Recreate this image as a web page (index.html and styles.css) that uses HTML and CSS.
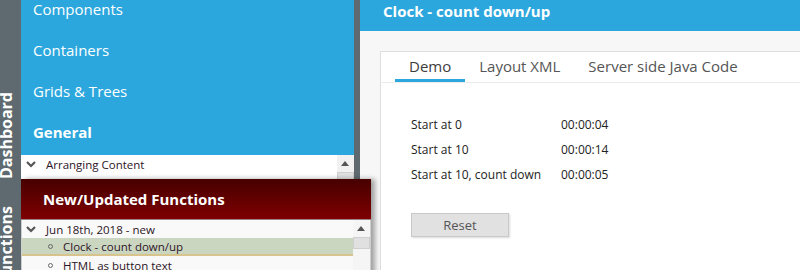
FILE: index.html
```html
<!DOCTYPE html>
<html lang="en">
<head>
    <meta charset="UTF-8">
    <meta name="viewport" content="width=device-width, initial-scale=1.0">
    <title>Clock - count down/up</title>
    <link rel="stylesheet" href="styles.css">
</head>
<body>
    <div class="app">
        <!-- Vertical tab strip -->
        <div class="side-tabs">
            <span class="side-tab first">Dashboard</span>
            <span class="side-tab">Functions</span>
        </div>

        <!-- Navigation sidebar -->
        <div class="sidebar">
            <ul class="menu">
                <li>Components</li>
                <li>Containers</li>
                <li>Grids &amp; Trees</li>
                <li class="active">General</li>
            </ul>
            <div class="tree-box">
                <div class="tree">
                    <div class="tree-row">
                        <svg class="chevron" width="10" height="7" viewBox="0 0 10 7"><polyline points="1,1 5,5 9,1" fill="none" stroke="#555" stroke-width="2.2"/></svg>
                        <span>Arranging Content</span>
                    </div>
                </div>
                <div class="scroll">
                    <div class="scroll-up"></div>
                    <div class="scroll-thumb"></div>
                </div>
            </div>
        </div>

        <!-- Main content -->
        <div class="main">
            <div class="main-header">Clock - count down/up</div>
            <div class="panel">
                <div class="tabs">
                    <div class="tab active">Demo</div>
                    <div class="tab">Layout XML</div>
                    <div class="tab">Server side Java Code</div>
                </div>
                <div class="demo">
                    <div class="clock-grid">
                        <span>Start at 0</span><span>00:00:04</span>
                        <span>Start at 10</span><span>00:00:14</span>
                        <span>Start at 10, count down</span><span>00:00:05</span>
                    </div>
                    <button class="reset-button">Reset</button>
                </div>
            </div>
        </div>
    </div>

    <!-- Floating "New/Updated Functions" panel -->
    <div class="news">
        <div class="news-head">New/Updated Functions</div>
        <div class="news-body">
            <div class="tree">
                <div class="tree-row">
                    <svg class="chevron" width="10" height="7" viewBox="0 0 10 7"><polyline points="1,1 5,5 9,1" fill="none" stroke="#555" stroke-width="2.2"/></svg>
                    <span>Jun 18th, 2018 - new</span>
                </div>
                <div class="tree-row leaf selected"><i class="bullet"></i><span>Clock - count down/up</span></div>
                <div class="tree-row leaf"><i class="bullet"></i><span>HTML as button text</span></div>
            </div>
            <div class="scroll">
                <div class="scroll-up"></div>
                <div class="scroll-thumb"></div>
            </div>
        </div>
    </div>
</body>
</html>
```

FILE: styles.css
```css
/* Basic Reset */
* {
    margin: 0;
    padding: 0;
    box-sizing: border-box;
}

body {
    font-family: 'Open Sans', 'Noto Sans', sans-serif;
    width: 800px;
    height: 270px;
    overflow: hidden;
    position: relative;
    background: #f7f7f7;
}

.app {
    display: flex;
    height: 270px;
}

/* Vertical tab strip */
.side-tabs {
    width: 21px;
    flex: 0 0 21px;
    background: #5e6a70;
    display: flex;
    flex-direction: column;
    overflow: hidden;
}

.side-tab {
    writing-mode: vertical-rl;
    transform: rotate(180deg);
    color: #fff;
    font-weight: 700;
    font-size: 16px;
    line-height: 22px;
    width: 22px;
    margin-left: -5px;
    margin-top: 27px;
    white-space: nowrap;
}

.side-tab.first {
    margin-top: 92px;
}

/* Sidebar */
.sidebar {
    width: 339px;
    flex: 0 0 339px;
    border-right: 6px solid #5e6a70;
    display: flex;
    flex-direction: column;
    overflow: hidden;
    background: #fff;
}

.menu {
    list-style: none;
    background: #2ca7dd;
    margin-top: -11px;
    padding-bottom: 2px;
}

.menu li {
    height: 41px;
    line-height: 41px;
    padding-left: 12px;
    color: #fff;
    font-size: 15px;
}

.menu li.active {
    font-weight: 700;
}

.tree-box {
    display: flex;
    flex: 1;
}

.tree {
    flex: 1;
}

.tree-row {
    display: flex;
    align-items: center;
    height: 18px;
    padding-left: 5px;
    font-size: 11.5px;
    color: #2d1426;
    white-space: nowrap;
}

.chevron {
    margin-right: 10px;
    margin-top: 1px;
}

.tree-row.leaf {
    padding-left: 26px;
}

.bullet {
    width: 5px;
    height: 5px;
    border: 1px solid #666;
    border-radius: 50%;
    margin-right: 10px;
}

.tree-row.selected {
    background: #cbd6c1;
    border-bottom: 2px solid #d9c38c;
}

/* Scrollbars */
.scroll {
    width: 17px;
    flex: 0 0 17px;
    background: #f1f1f1;
}

.scroll-up {
    width: 0;
    height: 0;
    margin: 6px 0 0 4px;
    border-left: 4px solid transparent;
    border-right: 4px solid transparent;
    border-bottom: 5px solid #555;
}

.scroll-thumb {
    height: 12px;
    margin-top: 6px;
    background: #e0e0e0;
    border: 1px solid #cfcfcf;
}

/* Main content */
.main {
    flex: 1;
    background: #f7f7f7;
    overflow: hidden;
}

.main-header {
    height: 31px;
    background: #2ca7dd;
    color: #fff;
    font-weight: 700;
    font-size: 15px;
    line-height: 22px;
    padding-left: 23px;
}

.panel {
    margin: 20px -2px 0 20px;
    background: #fff;
    border: 1px solid #dedede;
    height: 260px;
}

.tabs {
    display: flex;
    padding-left: 14px;
    border-bottom: 1px solid #ececec;
}

.tab {
    padding: 4px 14px 3px;
    font-size: 15px;
    line-height: 20px;
    color: #555;
    border-bottom: 3px solid transparent;
}

.tab.active {
    color: #3d3d3d;
    border-bottom-color: #2ca7dd;
}

.demo {
    padding: 29px 30px;
}

.clock-grid {
    display: grid;
    grid-template-columns: 150px auto;
    font-size: 12px;
    line-height: 25px;
    color: #222;
}

.reset-button {
    margin-top: 26px;
    width: 98px;
    height: 24px;
    font-family: inherit;
    font-size: 13px;
    color: #555;
    background: #e1e1e1;
    border: 1px solid #c9c9c9;
    box-shadow: 1px 1px 2px rgba(0,0,0,0.15);
}

/* Floating news panel */
.news {
    position: absolute;
    left: 21px;
    top: 179px;
    width: 350px;
    box-shadow: 4px 0 5px rgba(0,0,0,0.35);
}

.news-head {
    height: 41px;
    padding-left: 22px;
    line-height: 40px;
    color: #fff;
    font-weight: 700;
    font-size: 15px;
    background: linear-gradient(#470000, #7e0000);
    border-bottom: 1px solid #9a8585;
}

.news-body {
    display: flex;
    height: 60px;
    background: #f9f9f9;
    border-left: 1px solid #cfcfcf;
    border-right: 1px solid #cfcfcf;
}

.news-body .tree-row {
    padding-left: 4px;
}

.news-body .tree-row.leaf {
    padding-left: 26px;
}

.news-body .scroll {
    background: #f5f5f5;
}
```
